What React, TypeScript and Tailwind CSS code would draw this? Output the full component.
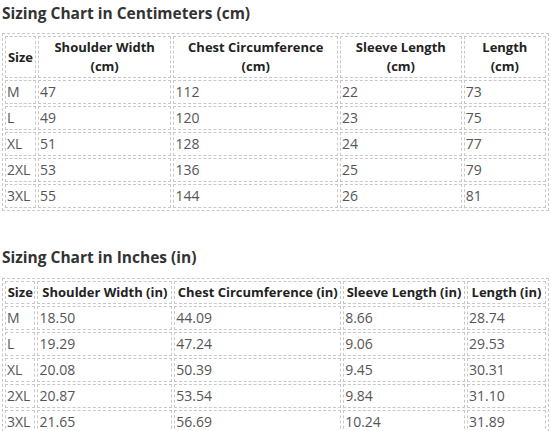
const cm = [
  ["M", "47", "112", "22", "73"],
  ["L", "49", "120", "23", "75"],
  ["XL", "51", "128", "24", "77"],
  ["2XL", "53", "136", "25", "79"],
  ["3XL", "55", "144", "26", "81"],
]

const inch = [
  ["M", "18.50", "44.09", "8.66", "28.74"],
  ["L", "19.29", "47.24", "9.06", "29.53"],
  ["XL", "20.08", "50.39", "9.45", "30.31"],
  ["2XL", "20.87", "53.54", "9.84", "31.10"],
  ["3XL", "21.65", "56.69", "10.24", "31.89"],
]

const cell = "border border-dashed border-[#c8c8c8] px-px py-px"

function SizeTable({ head, rows, widths }: { head: React.ReactNode[]; rows: string[][]; widths: string[] }) {
  return (
    <table className="w-full border-separate border-spacing-[2px] border border-dashed border-[#c8c8c8] text-[14px] leading-[20px]">
      <thead>
        <tr>
          {head.map((h, i) => (
            <th key={i} className={`${cell} ${widths[i]} whitespace-nowrap text-center text-[13px] leading-[19px] font-bold text-[#222]`}>
              {h}
            </th>
          ))}
        </tr>
      </thead>
      <tbody>
        {rows.map((r) => (
          <tr key={r[0]}>
            {r.map((v, i) => (
              <td key={i} className={`${cell} text-left text-[#555]`}>
                {v}
              </td>
            ))}
          </tr>
        ))}
      </tbody>
    </table>
  )
}

export default function App() {
  return (
    <div className="w-[551px] h-[431px] overflow-hidden bg-white px-[2px] font-['Open_Sans',sans-serif]">
      <h2 className="pt-px text-[15.5px] font-bold leading-6 text-[#333]">Sizing Chart in Centimeters (cm)</h2>
      <div className="mt-[8px]">
        <SizeTable
          head={[
            "Size",
            <>Shoulder Width<br />(cm)</>,
            <>Chest Circumference<br />(cm)</>,
            <>Sleeve Length<br />(cm)</>,
            <>Length<br />(cm)</>,
          ]}
          rows={cm}
          widths={["w-[31px]", "w-[135px]", "w-[166px]", "w-[123px]", "w-[84px]"]}
        />
      </div>
      <h2 className="mt-[34px] text-[15.5px] font-bold leading-6 text-[#333]">Sizing Chart in Inches (in)</h2>
      <div className="mt-[9px]">
        <SizeTable
          head={["Size", "Shoulder Width (in)", "Chest Circumference (in)", "Sleeve Length (in)", "Length (in)"]}
          rows={inch}
          widths={["w-[31px]", "w-[137px]", "w-[168px]", "w-[123px]", "w-[81px]"]}
        />
      </div>
    </div>
  )
}
